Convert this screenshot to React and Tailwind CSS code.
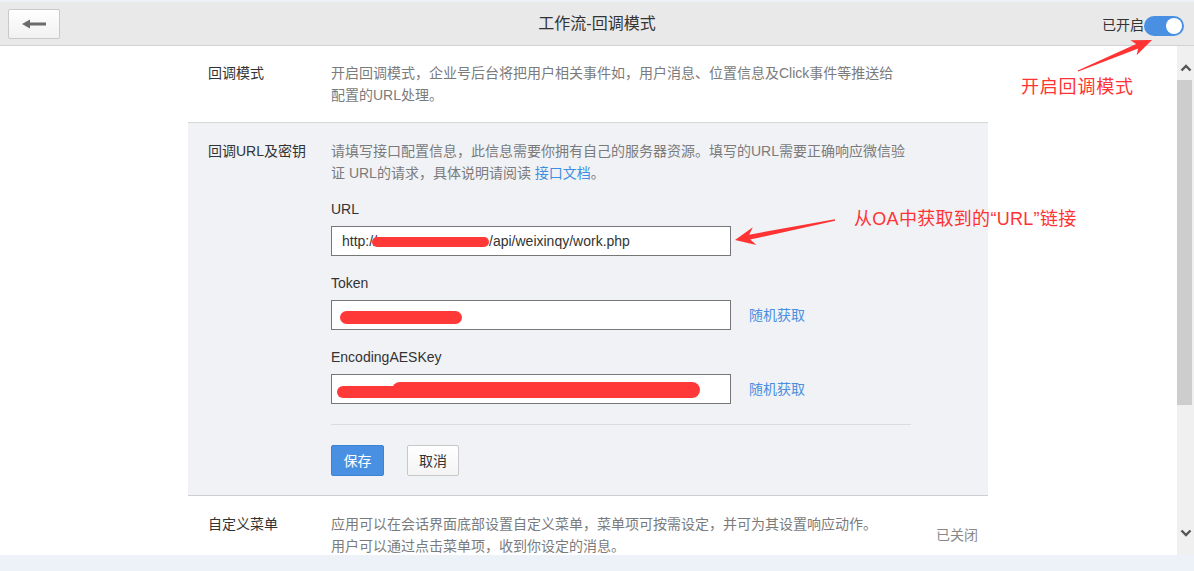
import React from "react";

const FONT = "font-['Liberation_Sans','Noto_Sans_CJK_SC',sans-serif]";

function Chevron({ up }) {
  return (
    <svg width="12" height="8" viewBox="0 0 12 8">
      <polyline
        points={up ? "1.5,6.5 6,2 10.5,6.5" : "1.5,1.5 6,6 10.5,1.5"}
        fill="none"
        stroke="#555"
        strokeWidth="2.4"
      />
    </svg>
  );
}

function Field({ label, children, link }) {
  return (
    <>
      <div className="mt-[17px] leading-[20px] text-[#333]">{label}</div>
      <div className="mt-[7px] flex items-center">
        <div className="relative h-[30px] w-[400px] border border-[#777] bg-white flex items-center pl-[10px] text-[#333]">
          {children}
        </div>
        {link && <span className="ml-[18px] text-[#4a8fe0]">随机获取</span>}
      </div>
    </>
  );
}

export default function App() {
  return (
    <div className={`${FONT} relative flex h-[571px] w-full flex-col overflow-hidden bg-white text-[14px]`}>
      {/* Header */}
      <div className="grid h-[46px] grid-cols-[1fr_auto_1fr] items-center border-t-2 border-b border-t-[#eef1f6] border-b-[#d2d2d2] bg-[#e9e9e9]">
        <div className="pl-[8px]">
          <div className="flex h-[30px] w-[52px] items-center justify-center rounded-[2px] border border-[#c9c9c9] bg-gradient-to-b from-white to-[#f1f1f1]">
            <svg width="24" height="10" viewBox="0 0 24 10">
              <polygon points="0,5 8,0.5 8,3.6 24,3.6 24,6.4 8,6.4 8,9.5" fill="#6b6b6b" />
            </svg>
          </div>
        </div>
        <div className="text-[16px] text-[#333]">工作流-回调模式</div>
        <div className="flex items-center justify-end pr-[10px] pt-[4px]">
          <span className="text-[14px] text-[#333]">已开启</span>
          <div className="flex h-[20px] w-[40px] items-center justify-end rounded-full bg-[#4a90e2] pr-[2px]">
            <div className="h-[16px] w-[16px] rounded-full bg-white" />
          </div>
        </div>
      </div>

      {/* Middle */}
      <div className="flex flex-1 overflow-hidden">
        <div className="flex-1 overflow-hidden">
          <div className="ml-[188px] w-[800px] leading-[22px]">
            {/* Section 1 */}
            <div className="flex border-b border-[#d6d6d6] pt-[16px] pb-[16px]">
              <div className="w-[143px] pl-[20px] text-[#333]">回调模式</div>
              <div className="w-[580px] whitespace-nowrap text-[#7b7b7b]">
                开启回调模式，企业号后台将把用户相关事件如，用户消息、位置信息及Click事件等推送给
                <br />
                配置的URL处理。
              </div>
            </div>

            {/* Section 2 */}
            <div className="flex border-b border-[#cfcfcf] bg-[#f0f2f6] pt-[17px] pb-[19px]">
              <div className="w-[143px] pl-[20px] text-[#333]">回调URL及密钥</div>
              <div className="flex w-[580px] flex-col">
                <div className="whitespace-nowrap text-[#7b7b7b]">
                  请填写接口配置信息，此信息需要你拥有自己的服务器资源。填写的URL需要正确响应微信验
                  <br />
                  证 URL的请求，具体说明请阅读 <span className="text-[#3f8fe0]">接口文档</span>。
                </div>
                <div className="mt-[15px] leading-[20px] text-[#333]">URL</div>
                <div className="mt-[7px] flex items-center">
                  <div className="flex h-[30px] w-[400px] items-center border border-[#777] bg-white pl-[10px] text-[#333]">
                    <span>http://</span>
                    <span className="-ml-[5px] mt-[1px] h-[10px] w-[117px] rounded-full bg-[#ff3838]" />
                    <span>/api/weixinqy/work.php</span>
                  </div>
                </div>
                <Field label="Token" link>
                  <span className="mt-[4px] ml-[-2px] h-[13px] w-[122px] rounded-full bg-[#ff3838]" />
                </Field>
                <Field label="EncodingAESKey" link>
                  <span className="absolute left-[5px] top-[11px] h-[12px] w-[110px] rounded-full bg-[#ff3838]" />
                  <span className="absolute left-[60px] top-[7px] h-[16px] w-[308px] rounded-full bg-[#ff3838]" />
                </Field>
                <div className="mt-[20px] h-px w-[580px] bg-[#dcdcdc]" />
                <div className="mt-[20px] flex">
                  <button className="h-[31px] w-[53px] rounded-[2px] border border-[#3d82d6] bg-[#4a90e2] text-white">
                    保存
                  </button>
                  <button className="ml-[23px] h-[31px] w-[52px] rounded-[2px] border border-[#c8c8c8] bg-gradient-to-b from-white to-[#f4f4f4] text-[#333]">
                    取消
                  </button>
                </div>
              </div>
            </div>

            {/* Section 3 */}
            <div className="flex pt-[17px] pb-[17px]">
              <div className="w-[143px] pl-[20px] text-[#333]">自定义菜单</div>
              <div className="w-[580px] whitespace-nowrap text-[#7b7b7b]">
                应用可以在会话界面底部设置自定义菜单，菜单项可按需设定，并可为其设置响应动作。
                <br />
                用户可以通过点击菜单项，收到你设定的消息。
              </div>
              <div className="self-center pl-[25px] text-[#888]">已关闭</div>
            </div>
          </div>
        </div>

        {/* Scrollbar */}
        <div className="flex w-[17px] flex-col bg-[#f0f0f0]">
          <div className="flex h-[34px] items-start justify-center pt-[18px]">
            <Chevron up />
          </div>
          <div className="h-[325px] w-[15px] bg-[#cdcdcd]" />
          <div className="flex-1" />
          <div className="flex h-[34px] items-end justify-center pb-[18px]">
            <Chevron />
          </div>
        </div>
      </div>

      {/* Bottom strip */}
      <div className="h-[16px] bg-[#edf2f9]" />

      {/* Annotations */}
      <svg className="pointer-events-none absolute left-0 top-0" width="1194" height="571">
        <polygon
          points="1077.8,70.5 1136.2,43.9 1130.4,40.35 1152,40 1136.6,55.15 1138.2,48.5 1078.2,71.5"
          fill="#ff3333"
        />
        <polygon
          points="834.9,219.3 749.2,234.65 752.8,227.3 735,240 756.4,244.9 750.2,239.55 835.1,220.7"
          fill="#ff3333"
        />
      </svg>
      <div className="pointer-events-none absolute left-[1021px] top-[76px] text-[18px] leading-[22px] tracking-[0.8px] text-[#ff3333]">
        开启回调模式
      </div>
      <div className="pointer-events-none absolute left-[854px] top-[208px] text-[18px] leading-[22px] tracking-[0.3px] text-[#ff3333]">
        从OA中获取到的“URL”链接
      </div>
    </div>
  );
}
